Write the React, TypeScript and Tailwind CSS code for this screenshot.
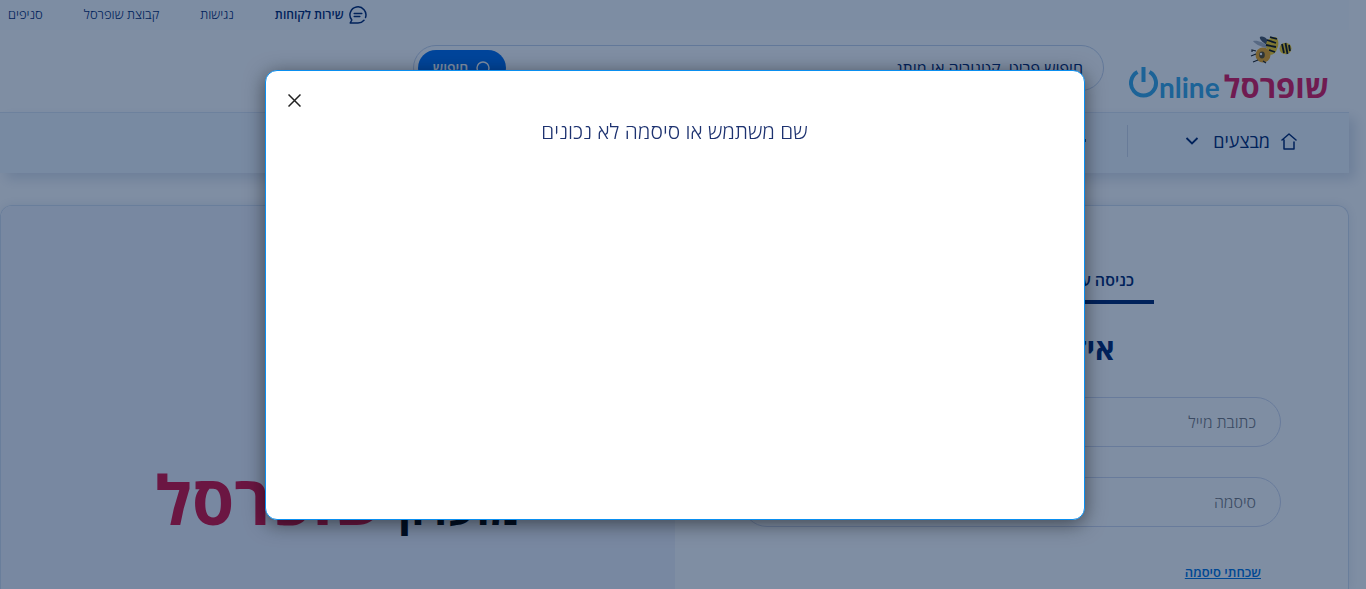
import type { ReactNode } from "react";

const topLinks = ["נגישות", "קבוצת שופרסל", "סניפים"];

function ChatIcon() {
  return (
    <svg width="18" height="18" viewBox="0 0 18 18" fill="none" stroke="#00266e" strokeWidth="1.5" strokeLinecap="round" strokeLinejoin="round" aria-hidden="true">
      <path d="M9 17H1.200l1.600-3A8 8 0 1 1 16.500 11.500M15 14.200A8 8 0 0 1 9 17M5.200 7.500h7.600M5.200 10.500h5.600" />
    </svg>
  );
}

function BeeIcon() {
  return (
    <svg width="42" height="28" viewBox="0 0 42 28" aria-hidden="true">
      <path d="M17 12C10 11 4 7 3 5c4-1 11 1 15 6z" fill="#aeb4bf" />
      <path d="M19 10C13 7 9 3 10 1c4-2 9 3 10 8z" fill="#4b5563" />
      <path d="M16 10c0-6 4-9 10-9 3 3 3 8 1 12-1 4-4 6-8 6z" fill="#ffd21f" />
      <path d="M17 4l9 3M16 9l10 2M19 14l6 2M20 1l7 2" stroke="#111" strokeWidth="1.800" />
      <circle cx="13" cy="19" r="7.5" fill="#f5a91c" />
      <ellipse cx="12" cy="19" rx="2.800" ry="3.400" fill="#5b4a25" />
      <circle cx="11" cy="18" r="1.200" fill="#fff" />
      <path d="M6 15l-4-1 0 2M6 18l-5 2M8 24l-5 2M13 25l3 2" stroke="#222" strokeWidth="1.200" fill="none" />
      <ellipse cx="35.500" cy="12.500" rx="6" ry="5.800" fill="#ffd21f" />
      <path d="M32 8l2 9M35.500 7l2 11M39 9l1 6" stroke="#111" strokeWidth="1.800" />
    </svg>
  );
}

function PowerLetter() {
  return (
    <svg width="30" height="31" viewBox="0 0 30 31" fill="none" stroke="#39a8e6" strokeWidth="4" aria-hidden="true">
      <path d="M8.500 5A12.500 12.500 0 1 0 20.500 5M14.500 0v15" />
    </svg>
  );
}

function HomeIcon() {
  return (
    <svg width="16" height="17" viewBox="0 0 16 17" fill="none" stroke="#00266e" strokeWidth="1.500" strokeLinecap="round" strokeLinejoin="round" aria-hidden="true">
      <path d="M1 7l7-6 7 6M3 7v9h10V9" />
    </svg>
  );
}

function Field({ id, type, label }: { id: string; type: string; label: string }) {
  return (
    <div>
      <label htmlFor={id} className="sr-only">{label}</label>
      <input
        id={id}
        type={type}
        placeholder={label}
        className="block h-[50px] w-full rounded-full border border-[#d0d8ee] bg-white px-6 text-base font-light text-[#00266e] outline-none placeholder:text-[#77777c] placeholder:opacity-100"
      />
    </div>
  );
}

function Tab({ active, children }: { active?: boolean; children: ReactNode }) {
  return (
    <button
      type="button"
      className={
        active
          ? "h-9 border-b-4 border-[#00266e] px-5 pb-4 font-semibold"
          : "h-9 border-b-4 border-transparent px-5 pb-4"
      }
    >
      {children}
    </button>
  );
}

export default function App() {
  return (
    <div dir="rtl" className="h-screen overflow-hidden bg-white pr-[17px] font-['Open_Sans','Noto_Sans',sans-serif] text-[#00266e]">
      <div className="flex h-full flex-col">
        <header className="shrink-0">
          <div className="flex h-[30px] items-center justify-end gap-[41px] bg-[#fbfcfe] pl-2 text-[13px] font-light">
            <a href="#service" className="flex items-center gap-[5px] text-xs font-semibold">
              <ChatIcon />
              שירות לקוחות
            </a>
            {topLinks.map((t) => (
              <a key={t} href="#top">{t}</a>
            ))}
          </div>
          <div className="flex h-[82px] items-start pr-5">
            <a href="#home" className="flex w-[200px] flex-col gap-[3px] pt-[6px]" aria-label="שופרסל Online">
              <span className="pr-[37px]"><BeeIcon /></span>
              <span className="flex h-9 items-baseline justify-between font-bold">
                <span className="text-[31px] leading-9 text-[#e0195a]">שופרסל</span>
                <span dir="ltr" className="flex items-baseline font-['Lato','Liberation_Sans',sans-serif] text-[28px] leading-9 text-[#39a8e6]">
                  <PowerLetter />nline
                </span>
              </span>
            </a>
            <form className="mr-[25px] mt-[15px] flex h-[46px] w-[691px] items-center rounded-full border border-[#c5d3ea] pl-1 pr-5">
              <label htmlFor="search" className="sr-only">חיפוש</label>
              <input id="search" placeholder="חיפוש פריט, קטגוריה או מותג" className="min-w-0 flex-1 bg-transparent text-base outline-none placeholder:text-[#00266e] placeholder:opacity-100" />
              <button type="button" className="flex h-9 w-[88px] items-center justify-center gap-2 rounded-full bg-[#006dee] text-sm font-semibold text-white">
                <svg width="15" height="15" viewBox="0 0 15 15" fill="none" stroke="currentColor" strokeWidth="1.500" aria-hidden="true">
                  <circle cx="7" cy="7" r="6" /><path d="M11 11l3 3" />
                </svg>
                חיפוש
              </button>
            </form>
          </div>
          <nav className="flex h-[61px] items-center border-t border-[#dbe4f3] bg-[#f1f6fd] pb-1 pr-[52px] text-lg shadow-[6px_6px_12px_rgba(0,38,110,0.15)]">
            <a href="#sales" className="flex items-center gap-[11px]">
              <HomeIcon />
              מבצעים
              <svg className="mr-[3px]" width="14" height="8" viewBox="0 0 14 8" fill="none" stroke="currentColor" strokeWidth="1.800" aria-hidden="true"><path d="M1.500 1l5.500 5.500L12.500 1" /></svg>
            </a>
            <span className="mr-[57px] h-8 w-px bg-[#d0d8e8]" />
            <svg className="mr-10" width="16" height="16" viewBox="0 0 16 16" fill="none" stroke="currentColor" strokeWidth="1.500" aria-hidden="true"><path d="M14 6v3M2 4h9M2 8h9M2 12h9" /></svg>
          </nav>
        </header>
        <main className="mt-8 grid min-h-0 flex-1 grid-cols-2 overflow-hidden rounded-t-xl border border-b-0 border-[#d3deee] shadow-[0_0_12px_rgba(0,38,110,0.1)]">
          <section className="flex flex-col px-[67px] pt-[62px]">
            <div className="flex justify-center gap-[6px] text-base">
              <Tab active>כניסה עם סיסמה</Tab>
              <Tab>כניסה עם קוד</Tab>
            </div>
            <h1 className="mt-[25px] text-center text-3xl font-bold leading-10">איזה כיף שבאת!</h1>
            <div className="mt-7 flex flex-col gap-[30px]">
              <Field id="email" type="email" label="כתובת מייל" />
              <Field id="password" type="password" label="סיסמה" />
            </div>
            <a href="#forgot" className="mr-5 mt-[35px] self-start text-[13px] font-semibold leading-5 text-[#0073e0] underline">שכחתי סיסמה</a>
          </section>
          <section className="flex justify-center bg-[#f1f3fa] pt-[243px]">
            <p className="flex h-[100px] items-baseline gap-3 whitespace-nowrap font-bold">
              <span className="text-[44px] text-black">מועדון</span>
              <span className="text-[68px] leading-[100px] text-[#d60f3d]">שופרסל</span>
            </p>
          </section>
        </main>
      </div>
      <div className="fixed inset-0 flex items-center justify-center bg-[#001d47]/50 pr-[17px]">
        <div role="dialog" aria-modal="true" aria-labelledby="message" className="relative h-[450px] w-full max-w-[820px] rounded-xl border border-[#0a8ff0] bg-white pt-11 shadow-[0_4px_20px_rgba(0,0,0,0.5)]">
          <button type="button" aria-label="סגירה" className="absolute left-[22px] top-[23px] text-[#222]">
            <svg width="13" height="13" viewBox="0 0 13 13" fill="none" stroke="currentColor" strokeWidth="1.500" aria-hidden="true"><path d="M.5.5l12 12M12.500.5l-12 12" /></svg>
          </button>
          <p id="message" className="text-center text-[21px] font-light leading-8 text-[#1d3270]">שם משתמש או סיסמה לא נכונים</p>
        </div>
      </div>
    </div>
  );
}
